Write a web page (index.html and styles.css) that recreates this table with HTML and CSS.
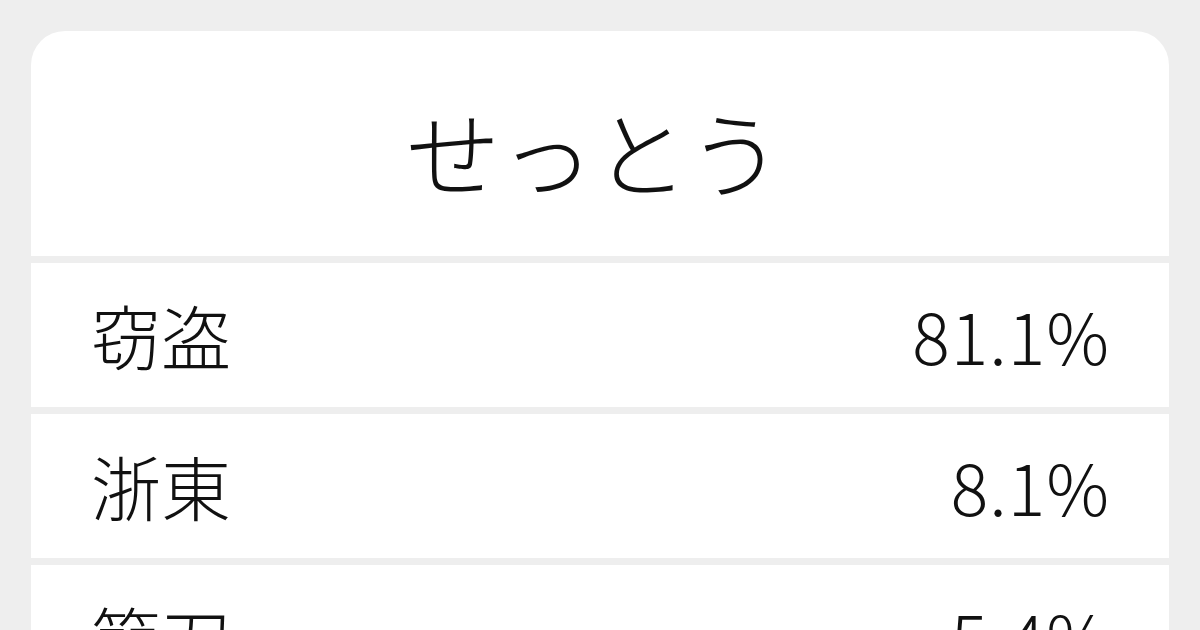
FILE: index.html
```html
<!DOCTYPE html>
<html lang="ja">
<head>
<meta charset="utf-8">
<link rel="stylesheet" href="styles.css">
</head>
<body>
<div class="card">
  <div class="title">せっとう</div>
  <div class="row"><span class="word">窃盗</span><span class="pct">81.1%</span></div>
  <div class="row"><span class="word">浙東</span><span class="pct">8.1%</span></div>
  <div class="row"><span class="word">節刀</span><span class="pct">5.4%</span></div>
</div>
</body>
</html>
```
FILE: styles.css
```css
html, body {
  margin: 0;
  padding: 0;
  background: #eeeeee;
}
body {
  padding-top: 31px;
  height: 630px;
  box-sizing: border-box;
  overflow: hidden;
  font-family: "Noto Sans CJK JP", "Noto Sans", sans-serif;
  font-weight: 300;
  color: #111111;
}
.card {
  width: 1138px;
  margin: 0 auto;
  border-radius: 34px 34px 0 0;
  overflow: hidden;
  display: flex;
  flex-direction: column;
  gap: 7px;
}
.title {
  background: #ffffff;
  height: 225px;
  display: flex;
  align-items: center;
  justify-content: center;
  font-size: 94px;
  line-height: 1;
  padding: 12px 12px 0 0;
  box-sizing: border-box;
}
.row {
  background: #ffffff;
  height: 144px;
  flex-shrink: 0;
  display: flex;
  align-items: center;
  justify-content: space-between;
  padding: 0 60px 0 60px;
  font-size: 70px;
  line-height: 1;
}
.pct {
  letter-spacing: 1px;
  margin-right: -1px;
}
```
